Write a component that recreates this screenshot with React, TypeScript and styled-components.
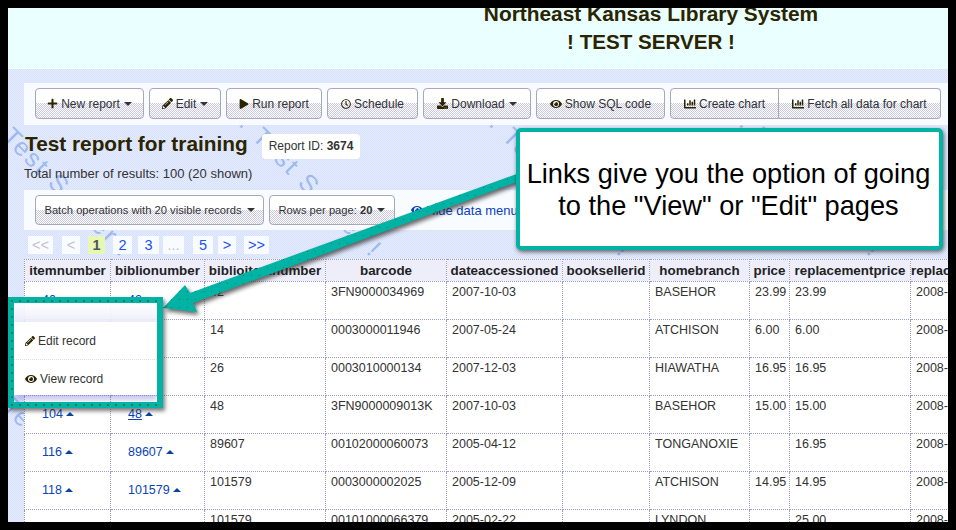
import React, { FC, ReactNode } from 'react'
import styled, { createGlobalStyle } from 'styled-components'
import { FaChartBar, FaDownload, FaEye, FaPencilAlt, FaPlay, FaPlus, FaRegClock } from 'react-icons/fa'

const TEAL = '#00b3a4'
const TEAL_DOTS = `radial-gradient(circle at 50% 50%, #1f7a55 0.7px, transparent 0.9px) 0 0 / 8px 8px, ${TEAL}`

const columns = [86, 94, 121, 121, 116, 87, 100, 40, 121, 90]

const headers = [
  'itemnumber', 'biblionumber', 'biblioitemnumber', 'barcode', 'dateaccessioned',
  'booksellerid', 'homebranch', 'price', 'replacementprice', 'replacementpricedate'
]

const rows = [
  ['40', '42', '42', '3FN9000034969', '2007-10-03', '', 'BASEHOR', '23.99', '23.99', '2008-01-09'],
  ['52', '14', '14', '0003000011946', '2007-05-24', '', 'ATCHISON', '6.00', '6.00', '2008-01-09'],
  ['78', '26', '26', '0003010000134', '2007-12-03', '', 'HIAWATHA', '16.95', '16.95', '2008-01-09'],
  ['104', '48', '48', '3FN9000009013K', '2007-10-03', '', 'BASEHOR', '15.00', '15.00', '2008-01-09'],
  ['116', '89607', '89607', '00102000060073', '2005-04-12', '', 'TONGANOXIE', '', '16.95', '2008-01-09'],
  ['118', '101579', '101579', '0003000002025', '2005-12-09', '', 'ATCHISON', '14.95', '14.95', '2008-01-09'],
  ['119', '101579', '101579', '00101000066379', '2005-02-22', '', 'LYNDON', '', '25.00', '2008-01-09']
]

const pages = [
  { label: '<<', width: 25, gap: 0, state: 'off' },
  { label: '<', width: 18, gap: 9, state: 'off' },
  { label: '1', width: 17, gap: 8, state: 'on' },
  { label: '2', width: 19, gap: 8, state: 'link' },
  { label: '3', width: 21, gap: 6, state: 'link' },
  { label: '...', width: 21, gap: 4, state: 'off' },
  { label: '5', width: 20, gap: 9, state: 'link' },
  { label: '>', width: 18, gap: 5, state: 'link' },
  { label: '>>', width: 25, gap: 8, state: 'link' }
]

const stamps = [
  [-12, 125], [238, 125], [488, 125], [738, 125],
  [-12, 395], [238, 395], [488, 395], [738, 395]
]

const Btn: FC<{ width: number; icon?: ReactNode; caret?: boolean; children: ReactNode }> = ({ width, icon, caret, children }) => (
  <Button $width={width}>
    {icon}
    <span>{children}</span>
    {caret && <Caret />}
  </Button>
)

const App: FC = () => (
  <Frame>
    <GlobalStyle />
    <Page>
      <Header>
        <LibraryName>Northeast Kansas Library System</LibraryName>
        <ServerName>! TEST SERVER !</ServerName>
      </Header>
      <Main>
        <Watermark width="940" height="453">
          <g transform="translate(-8,-69)">
            {stamps.map(([x, y]) => (
              <WatermarkText key={`${x}-${y}`} transform={`translate(${x},${y}) rotate(45)`}>
                ! Test Server !
              </WatermarkText>
            ))}
          </g>
        </Watermark>
        <Toolbar>
          <Btn width={109} icon={<FaPlus size={11} />} caret>New report</Btn>
          <Btn width={72} icon={<FaPencilAlt size={11} />} caret>Edit</Btn>
          <Btn width={96} icon={<FaPlay size={10} />}>Run report</Btn>
          <Btn width={91} icon={<FaRegClock size={10} />}>Schedule</Btn>
          <Btn width={108} icon={<FaDownload size={11} />} caret>Download</Btn>
          <Btn width={129} icon={<FaEye size={12} />}>Show SQL code</Btn>
          <ButtonGroup>
            <Btn width={109} icon={<FaChartBar size={12} />}>Create chart</Btn>
            <Btn width={162} icon={<FaChartBar size={12} />}>Fetch all data for chart</Btn>
          </ButtonGroup>
        </Toolbar>
        <TitleRow>
          <Title>Test report for training</Title>
          <ReportId>Report ID: <b>3674</b></ReportId>
        </TitleRow>
        <Total>Total number of results: 100 (20 shown)</Total>
        <BatchBar>
          <Btn width={229} caret>Batch operations with 20 visible records</Btn>
          <Btn width={126} caret>Rows per page: <b>20</b></Btn>
          <HideLink><FaEye size={12} /> Hide data menus</HideLink>
        </BatchBar>
        <Pagination>
          {pages.map((p) => (
            <PageItem key={p.label} $width={p.width} $gap={p.gap} $state={p.state}>{p.label}</PageItem>
          ))}
        </Pagination>
        <Table>
          <colgroup>
            {columns.map((w, i) => <col key={i} width={w} />)}
          </colgroup>
          <thead>
            <tr>{headers.map((h) => <Th key={h}>{h}</Th>)}</tr>
          </thead>
          <tbody>
            {rows.map((row, r) => (
              <tr key={r}>
                {row.map((cell, c) => c < 2
                  ? (
                    <LinkCell key={c}>
                      <RecordLink $hover={r === 3 && c === 1}>{cell}</RecordLink>
                      <UpCaret />
                    </LinkCell>
                  )
                  : <Td key={c}>{cell}</Td>)}
              </tr>
            ))}
          </tbody>
        </Table>
      </Main>

      <Arrow width="940" height="514">
        <defs>
          <pattern id="dots" width="8" height="8" patternUnits="userSpaceOnUse">
            <rect width="1" height="1" x="3" y="3" fill="#1f7a55" />
          </pattern>
        </defs>
        <g transform="translate(-8,-8)">
          <polygon fill={TEAL} points="522,172 190,293 185,285 163,308 197,312 193,303 522,180" />
          <polygon fill="url(#dots)" points="522,172 190,293 185,285 163,308 197,312 193,303 522,180" />
        </g>
      </Arrow>

      <Highlight>
        <MenuShade />
        <Menu>
          <MenuItem><FaPencilAlt size={10} /> Edit record</MenuItem>
          <MenuItem $divider><FaEye size={12} /> View record</MenuItem>
        </Menu>
      </Highlight>

      <Callout>
        Links give you the option of going<br />
        to the "View" or "Edit" pages
      </Callout>
    </Page>
  </Frame>
)

export default App

const GlobalStyle = createGlobalStyle`
  html, body {
    margin: 0;
    padding: 0;
    background: #000;
  }
  body {
    font-family: "Liberation Sans", Arial, sans-serif;
    color: #333;
  }
`

const Frame = styled.div`
  width: 956px;
  height: 530px;
  box-sizing: border-box;
  padding: 8px;
  background: #000;
`

const Page = styled.div`
  position: relative;
  width: 940px;
  height: 514px;
  overflow: hidden;
`

const Header = styled.header`
  display: flow-root;
  height: 61px;
  box-sizing: border-box;
  padding-left: 343px;
  text-align: center;
  color: #2b2400;
  font-weight: 700;
  background: repeating-conic-gradient(#e2ffff 0 25%, #f2ffff 0 50%) 0 0 / 2px 2px;
`

const LibraryName = styled.div`
  width: 600px;
  margin-top: -6px;
  font-size: 20.9px;
  line-height: 24px;
`

const ServerName = styled.div`
  width: 600px;
  margin-top: 4px;
  font-size: 20.6px;
  line-height: 24px;
`

const Main = styled.main`
  position: relative;
  isolation: isolate;
  height: 453px;
  overflow: hidden;
  padding: 14px 0 0 16px;
  box-sizing: border-box;
  background: repeating-conic-gradient(#d6e2fb 0 25%, #e6ecfd 0 50%) 0 0 / 2px 2px;
`

const Watermark = styled.svg`
  position: absolute;
  left: 0;
  top: 0;
  z-index: -1;
`

const WatermarkText = styled.text`
  font-family: "Liberation Sans", Arial, sans-serif;
  font-size: 25px;
  letter-spacing: 2.4px;
  fill: #9db9f0;
`

const Toolbar = styled.div`
  display: flex;
  gap: 5px;
  height: 42px;
  box-sizing: border-box;
  padding: 5px 0 0 11px;
  background: #f8fbff;
`

const Button = styled.div<{ $width: number }>`
  display: flex;
  flex: none;
  align-items: center;
  justify-content: center;
  gap: 3px;
  width: ${(p) => p.$width}px;
  height: 31px;
  box-sizing: border-box;
  border: 1px solid #a9a9b4;
  border-radius: 4px;
  font-size: 12px;
  color: #333;
  white-space: nowrap;
  background:
    linear-gradient(#fff 50%, transparent 50%),
    repeating-conic-gradient(#fff 0 25%, #c9c9e6 0 50%) 0 0 / 2px 2px;

  svg {
    color: #2b2400;
    flex: none;
  }
`

const ButtonGroup = styled.div`
  display: flex;

  ${Button}:first-child {
    border-radius: 4px 0 0 4px;
  }

  ${Button}:last-child {
    border-left: 0;
    border-radius: 0 4px 4px 0;
  }
`

const Caret = styled.i`
  width: 0;
  height: 0;
  margin-left: 1px;
  border-top: 4px solid #333;
  border-left: 4px solid transparent;
  border-right: 4px solid transparent;
`

const TitleRow = styled.div`
  display: flex;
  align-items: center;
  height: 39px;
  padding-left: 1px;
`

const Title = styled.h1`
  margin: 0 0 2px;
  font-size: 20.8px;
  line-height: 24px;
  color: #2b2400;
`

const ReportId = styled.div`
  margin: 3px 0 0 14px;
  padding: 0 7px;
  height: 25px;
  line-height: 25px;
  border-radius: 4px;
  font-size: 12px;
  background: #fff;
`

const Total = styled.div`
  height: 26px;
  line-height: 20px;
  font-size: 13px;
  color: #333;
`

const BatchBar = styled(Toolbar)`
  height: 40px;
  align-items: flex-start;

  ${Button} {
    height: 30px;
    font-size: 11.2px;
    gap: 4px;
  }
`

const HideLink = styled.div`
  display: flex;
  align-items: center;
  gap: 3px;
  height: 30px;
  margin-left: 11px;
  font-size: 13px;
  color: #0a3fc0;
`

const Pagination = styled.nav`
  display: flex;
  height: 18px;
  margin: 6px 0 0 4px;
`

const PageItem = styled.span<{ $width: number; $gap: number; $state: string }>`
  width: ${(p) => p.$width}px;
  margin-left: ${(p) => p.$gap}px;
  text-align: center;
  font-size: 14.5px;
  line-height: 18px;
  color: ${(p) => (p.$state === 'off' ? '#c4c4c4' : p.$state === 'on' ? '#555' : '#1e50f0')};
  font-weight: ${(p) => (p.$state === 'on' ? 700 : 400)};
  background: ${(p) => (p.$state === 'on' ? '#e6f8b4' : '#f8fbff')};
`

const Table = styled.table`
  table-layout: fixed;
  width: 896px;
  margin: 5px 0 0;
  border-collapse: collapse;
  background: #fff;
`

const Th = styled.th`
  height: 21px;
  padding: 0;
  overflow: hidden;
  white-space: nowrap;
  font-size: 13.4px;
  line-height: 18px;
  color: #222;
  border: 1px dotted #9d9dcc;
  border-left-color: #999;
  background: repeating-conic-gradient(#fff 0 25%, #dcdcf6 0 50%) 0 0 / 2px 2px;
`

const Td = styled.td`
  height: 38px;
  box-sizing: border-box;
  padding: 3px 5px 0;
  overflow: hidden;
  white-space: nowrap;
  vertical-align: top;
  font-size: 12.5px;
  line-height: 15px;
  color: #333;
  border: 1px dotted #9d9dcc;
  border-left-color: #999;
`

const LinkCell = styled(Td)`
  vertical-align: middle;
  padding: 0 0 0 17px;
`

const RecordLink = styled.span<{ $hover?: boolean }>`
  color: #0a44b8;
  text-decoration: ${(p) => (p.$hover ? 'underline' : 'none')};
`

const UpCaret = styled.i`
  display: inline-block;
  width: 0;
  height: 0;
  margin: 0 0 2px 3px;
  border-bottom: 4px solid #0a44a0;
  border-left: 4px solid transparent;
  border-right: 4px solid transparent;
`

const Arrow = styled.svg`
  position: absolute;
  left: 0;
  top: 0;
  pointer-events: none;
  filter: drop-shadow(2px 3px 2px rgba(40, 40, 40, 0.7));
`

const Highlight = styled.div`
  position: absolute;
  left: 0;
  top: 289px;
  width: 155px;
  height: 111px;
  box-sizing: border-box;
  padding: 6px;
  box-shadow: 2px 3px 4px rgba(40, 40, 40, 0.6);

  &::after {
    content: '';
    position: absolute;
    inset: 0;
    padding: 6px;
    background: ${TEAL_DOTS};
    mask: linear-gradient(#000 0 0) content-box exclude, linear-gradient(#000 0 0);
  }
`

const MenuShade = styled.div`
  height: 19px;
  background: linear-gradient(rgba(255, 255, 255, 0.9), rgba(235, 235, 250, 0.9));
`

const Menu = styled.div`
  height: 73px;
  background: #fff;
  box-shadow: 0 5px 6px rgba(90, 90, 200, 0.35);
`

const MenuItem = styled.div<{ $divider?: boolean }>`
  display: flex;
  align-items: center;
  gap: 3px;
  height: 37px;
  padding-left: 11px;
  font-size: 12px;
  color: #333;
  border-top: ${(p) => (p.$divider ? '1px dotted #ddd' : '0')};

  svg {
    color: #2b2400;
  }
`

const Callout = styled.div`
  position: absolute;
  left: 508px;
  top: 120px;
  display: flex;
  align-items: center;
  justify-content: center;
  width: 427px;
  height: 122px;
  box-sizing: border-box;
  padding: 2px 2px 0 0;
  border: 4px solid ${TEAL};
  border-radius: 5px;
  text-align: center;
  font-size: 27.2px;
  line-height: 32px;
  color: #000;
  background: #fff;
  box-shadow: 1px 2px 4px rgba(40, 40, 40, 0.7);
`
